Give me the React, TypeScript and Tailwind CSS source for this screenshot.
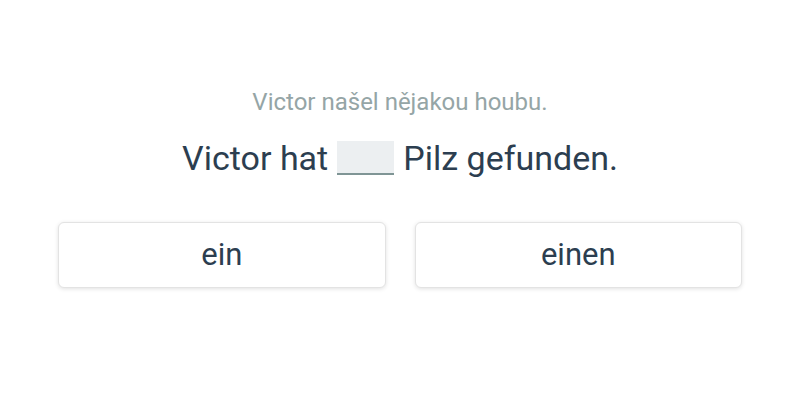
import React from 'react';

const options = ['ein', 'einen'];

export default function App() {
  return (
    <div className="w-[800px] h-[400px] bg-white font-['Roboto',sans-serif] flex flex-col items-center pt-[88px]">
      {/* Prompt */}
      <p className="text-[24px] leading-[28px] text-[#95a5a6]">Victor našel nějakou houbu.</p>
      <p className="mt-[22px] text-[34px] leading-[40px] text-[#2c3e50] flex items-center">
        <span>Victor hat</span>
        <span className="inline-block w-[57px] h-[34px] mx-[9px] bg-[#eceff1] border-b-2 border-[#7f9595]"></span>
        <span>Pilz gefunden.</span>
      </p>

      {/* Choices */}
      <div className="mt-[44px] w-full px-[58px] grid grid-cols-2 gap-[29px]">
        {options.map((o) => (
          <button
            key={o}
            className="h-[66px] rounded-md bg-white border border-[#e3e3e3] shadow-[0_1px_4px_rgba(0,0,0,0.12)] text-[31px] text-[#2c3e50]"
          >
            {o}
          </button>
        ))}
      </div>
    </div>
  );
}
